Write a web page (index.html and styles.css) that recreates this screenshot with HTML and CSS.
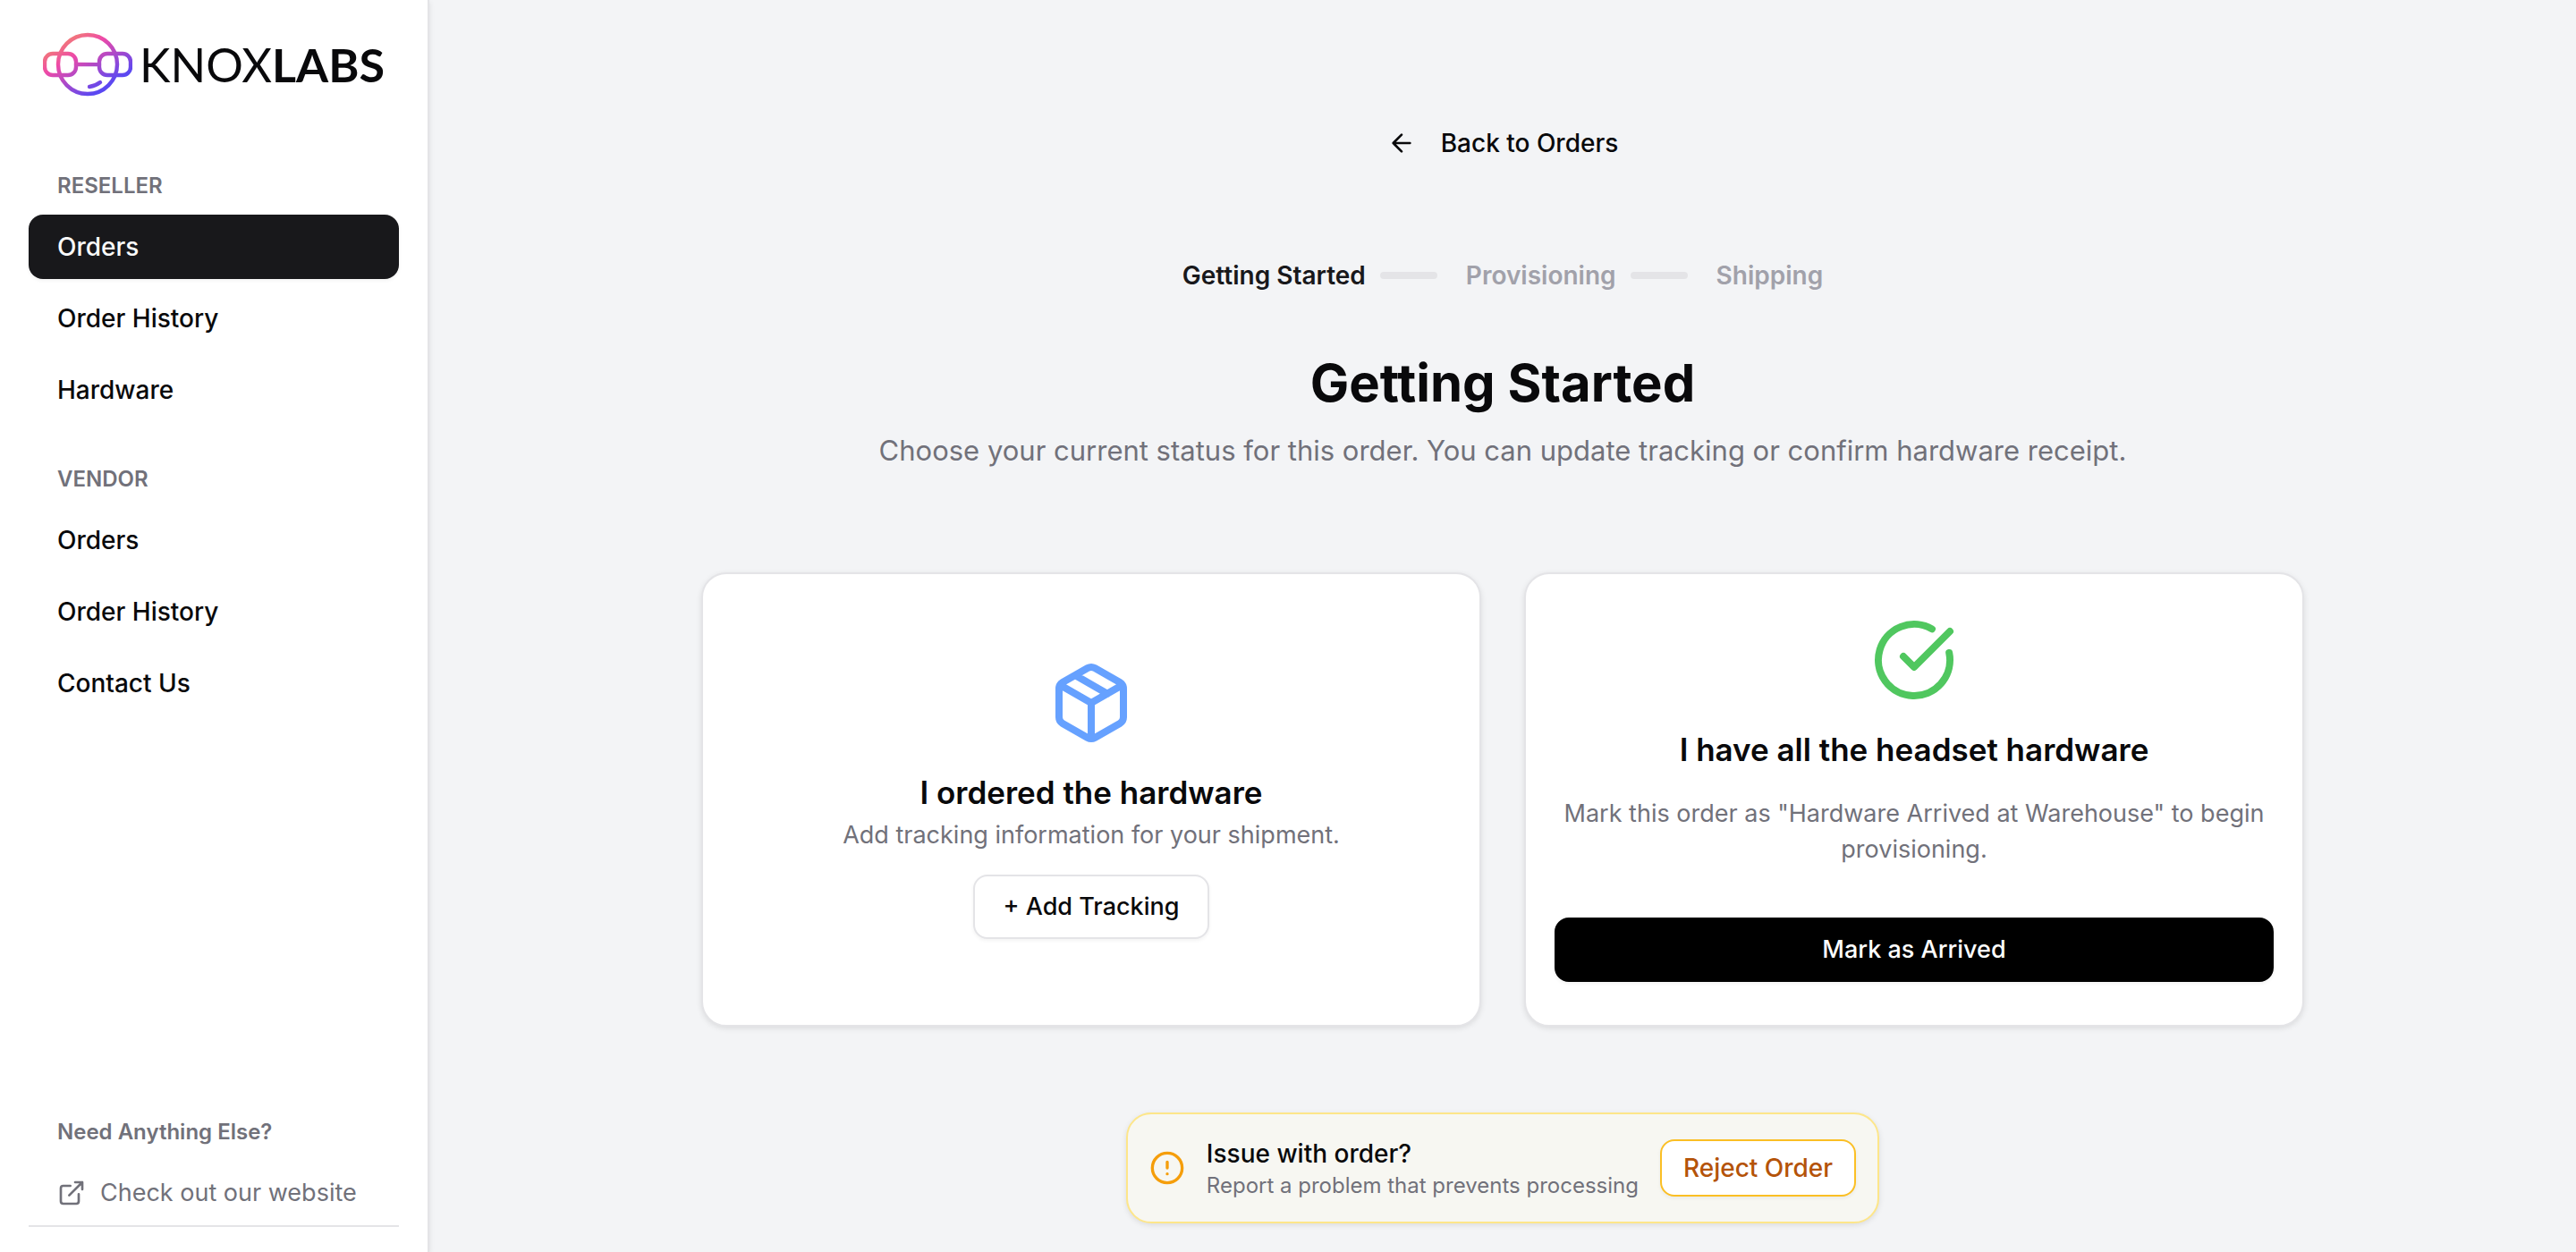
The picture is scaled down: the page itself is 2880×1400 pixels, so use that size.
FILE: index.html
```html
<!DOCTYPE html>
<html lang="en">
<head>
<meta charset="utf-8">
<title>Getting Started - Knoxlabs</title>
<link rel="stylesheet" href="styles.css">
</head>
<body>
<div class="layout">
  <aside class="sidebar">
    <a class="brand" href="#" aria-label="Knoxlabs">
      <svg class="brand-mark" viewBox="0 0 100 72">
        <defs>
          <linearGradient id="brand" gradientUnits="userSpaceOnUse" x1="20" y1="8" x2="57" y2="69">
            <stop offset="0" stop-color="#f28072"/>
            <stop offset=".33" stop-color="#ee4aa8"/>
            <stop offset="1" stop-color="#5a48f2"/>
          </linearGradient>
        </defs>
        <g stroke="url(#brand)">
          <circle cx="50" cy="36" r="33"/>
          <rect x="2" y="24" width="35" height="24" rx="9"/>
          <rect x="63" y="24" width="35" height="24" rx="9"/>
          <path d="M37 36l26 .1"/>
          <path d="M52 61q7-1 12-5"/>
        </g>
      </svg>
      <span class="brand-name">KNOX<b>LABS</b></span>
    </a>
    <nav class="nav">
      <section class="nav-group">
        <h2 class="nav-label">RESELLER</h2>
        <a class="nav-item active" href="#">Orders</a>
        <a class="nav-item" href="#">Order History</a>
        <a class="nav-item" href="#">Hardware</a>
      </section>
      <section class="nav-group">
        <h2 class="nav-label">VENDOR</h2>
        <a class="nav-item" href="#">Orders</a>
        <a class="nav-item" href="#">Order History</a>
        <a class="nav-item" href="#">Contact Us</a>
      </section>
    </nav>
    <section class="nav-footer">
      <h2 class="nav-label">Need Anything Else?</h2>
      <a class="nav-item site-link" href="#">
        <svg class="icon-small" viewBox="0 0 24 24"><path d="M15 3h6v6M10 14 21 3M18 13v6a2 2 0 0 1-2 2H5a2 2 0 0 1-2-2V8a2 2 0 0 1 2-2h6"/></svg>
        Check out our website
      </a>
    </section>
  </aside>
  <main class="main">
    <a class="back" href="#">
      <svg class="icon-small" viewBox="0 0 24 24"><path d="m12 19-7-7 7-7M19 12H5"/></svg>
      Back to Orders
    </a>
    <ol class="steps">
      <li class="step current">Getting Started</li>
      <li class="step">Provisioning</li>
      <li class="step">Shipping</li>
    </ol>
    <h1 class="title">Getting Started</h1>
    <p class="subtitle">Choose your current status for this order. You can update tracking or confirm hardware receipt.</p>
    <div class="cards">
      <section class="card">
        <svg class="icon-large blue" viewBox="0 0 24 24"><path d="m7.5 4.27 9 5.15M21 8a2 2 0 0 0-1-1.73l-7-4a2 2 0 0 0-2 0l-7 4A2 2 0 0 0 3 8v8a2 2 0 0 0 1 1.73l7 4a2 2 0 0 0 2 0l7-4A2 2 0 0 0 21 16ZM3.3 7l8.7 5 8.7-5M12 22V12"/></svg>
        <h2 class="card-title">I ordered the hardware</h2>
        <p class="card-text">Add tracking information for your shipment.</p>
        <button class="button" type="button">+ Add Tracking</button>
      </section>
      <section class="card roomy">
        <svg class="icon-large green" viewBox="0 0 24 24"><path d="M21.801 10A10 10 0 1 1 17 3.335M9 11l3 3L22 4"/></svg>
        <h2 class="card-title">I have all the headset hardware</h2>
        <p class="card-text">Mark this order as "Hardware Arrived at Warehouse" to begin provisioning.</p>
        <button class="button primary" type="button">Mark as Arrived</button>
      </section>
    </div>
    <section class="issue">
      <svg class="icon-alert" viewBox="0 0 24 24"><circle cx="12" cy="12" r="10"/><path d="M12 8v4M12 16h.01"/></svg>
      <div class="issue-copy">
        <h2 class="issue-title">Issue with order?</h2>
        <p class="issue-text">Report a problem that prevents processing</p>
      </div>
      <button class="button reject" type="button">Reject Order</button>
    </section>
  </main>
</div>
</body>
</html>
```
FILE: styles.css
```css
* { box-sizing: border-box; margin: 0; padding: 0; }

body {
  font-family: Inter, "Liberation Sans", sans-serif;
  font-size: 28px;
  line-height: 40px;
  color: #09090b;
  background: #f3f4f6;
}

a { color: inherit; text-decoration: none; }

svg {
  flex: none;
  fill: none;
  stroke: currentColor;
  stroke-width: 2;
  stroke-linecap: round;
  stroke-linejoin: round;
}

.layout { display: flex; min-height: 100vh; }

/* Sidebar */
.sidebar {
  display: flex;
  flex-direction: column;
  flex: none;
  width: 480px;
  padding: 36px 32px 28px;
  background: #fff;
  border-right: 2px solid #e4e4e7;
  box-shadow: 0 2px 6px rgb(0 0 0 / 10%);
}

.brand { display: flex; align-items: center; gap: 8px; padding-left: 16px; margin-bottom: 68px; }
.brand-mark { width: 100px; height: 72px; stroke-width: 4.4; }
.brand-name { font-family: Lato, sans-serif; font-size: 52px; line-height: 72px; }
.brand-name b { font-weight: 700; }

.nav { display: flex; flex-direction: column; gap: 32px; }
.nav-group { display: flex; flex-direction: column; }
.nav-label {
  padding: 12px 32px;
  font-size: 24px;
  font-weight: 600;
  color: #71717a;
}
.nav-item {
  display: flex;
  align-items: center;
  height: 72px;
  padding: 0 32px;
  border-radius: 16px;
  font-weight: 500;
}
.nav-item + .nav-item { margin-top: 8px; }
.nav-item.active { color: #fafafa; background: #18181b; box-shadow: 0 2px 4px rgb(0 0 0 / 5%); }
.nav-footer { margin-top: auto; border-bottom: 2px solid #e4e4e7; }
.site-link { gap: 16px; font-size: 27px; font-weight: 400; color: #71717a; }

.icon-small { width: 32px; height: 32px; }
.icon-large { width: 96px; height: 96px; }
.icon-alert { width: 40px; height: 40px; color: #f59e0b; }
.blue { color: #66a1ff; }
.green { color: #50c75f; }

/* Main column */
.main {
  display: flex;
  flex-direction: column;
  align-items: center;
  flex: 1;
  padding: 140px 48px 32px;
}
.back { display: flex; align-items: center; gap: 28px; font-weight: 500; }

.steps { display: flex; margin-top: 108px; list-style: none; }
.step { display: flex; align-items: center; font-weight: 600; color: #a1a1aa; }
.step.current { color: #18181b; }
.step + .step::before {
  content: "";
  width: 64px;
  height: 8px;
  margin: 0 32px 0 16px;
  border-radius: 4px;
  background: #e4e4e7;
}

.title { margin-top: 64px; font-size: 58px; line-height: 72px; font-weight: 700; }
.subtitle { margin-top: 16px; font-size: 31px; line-height: 48px; color: #71717a; text-align: center; }

.cards {
  display: grid;
  grid-template-columns: 1fr 1fr;
  gap: 48px;
  width: 100%;
  max-width: 1792px;
  margin-top: 112px;
}
.card {
  display: flex;
  flex-direction: column;
  align-items: center;
  justify-content: center;
  padding: 48px 32px;
  text-align: center;
  background: #fff;
  border: 2px solid #e4e4e7;
  border-radius: 28px;
  box-shadow: 0 2px 6px rgb(0 0 0 / 10%);
}
.card-title { margin-top: 32px; font-size: 35px; font-weight: 600; }
.card-text { margin: 8px 0 24px; font-size: 27px; color: #71717a; }
.roomy .card-text { margin: 32px 0 56px; }

.button {
  height: 72px;
  padding: 0 32px;
  font: inherit;
  font-size: 27px;
  font-weight: 500;
  color: #09090b;
  background: #fff;
  border: 2px solid #e4e4e7;
  border-radius: 16px;
  box-shadow: 0 2px 4px rgb(0 0 0 / 5%);
}
.button.primary { width: 100%; color: #fff; background: #000; border-color: #000; }
.button.reject { height: 64px; padding: 0 24px; font-size: 28px; color: #b45309; border-color: #fbbf24; }

.issue {
  display: flex;
  align-items: center;
  gap: 24px;
  margin-top: 96px;
  padding: 24px;
  min-height: 124px;
  background: #f7f7f2;
  border: 2px solid #fde68a;
  border-radius: 28px;
  box-shadow: 0 2px 6px rgb(0 0 0 / 10%);
}
.issue-title { font-size: 28px; line-height: 40px; font-weight: 500; }
.issue-text { font-size: 24px; line-height: 32px; color: #71717a; }
```
